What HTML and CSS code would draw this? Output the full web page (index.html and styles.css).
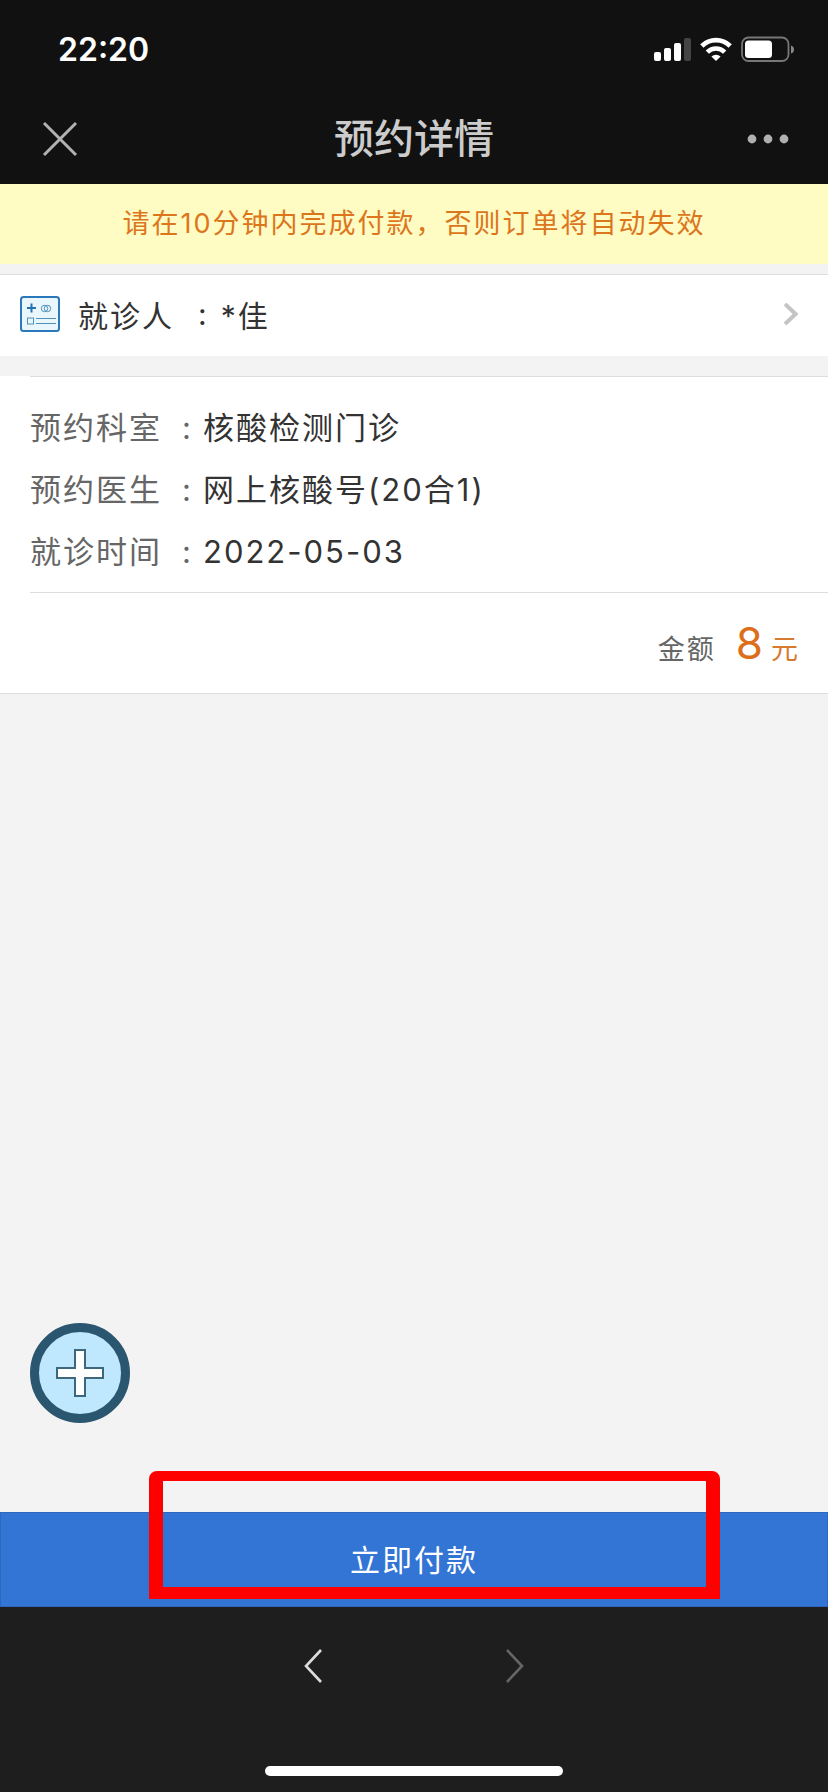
FILE: index.html
```
<!DOCTYPE html>
<html lang="zh-CN">
<head>
    <meta charset="UTF-8">
    <meta name="viewport" content="width=device-width, initial-scale=1.0">
    <title>预约详情</title>
    <link rel="stylesheet" href="styles.css">
</head>
<body>
    <header class="header">
        <div class="status-bar">
            <span class="time">22:20</span>
            <div class="status-icons">
                <svg width="37" height="24" viewBox="0 0 37 24">
                    <g fill="#fff">
                        <rect x="0" y="15" width="7" height="9" rx="2"/>
                        <rect x="10" y="11" width="7" height="13" rx="2"/>
                        <rect x="20" y="6" width="7" height="18" rx="2"/>
                    </g>
                    <rect x="30" y="1" width="7" height="23" rx="2" fill="#444"/>
                </svg>
                <svg width="32" height="24" viewBox="0 0 32 24">
                    <g fill="none" stroke="#fff" stroke-width="4.6">
                        <path d="M1.8 9A20.2 20.2 0 0 1 30.2 9"/>
                        <path d="M7.3 15.1A12.4 12.4 0 0 1 24.7 15.1"/>
                    </g>
                    <path d="M16 24l-4.6-4.5a6.6 6.6 0 0 1 9.2 0z" fill="#fff"/>
                </svg>
                <svg width="54" height="26" viewBox="0 0 54 26">
                    <rect x="1" y="1.5" width="46.5" height="23.5" rx="6.5" fill="none" stroke="#777" stroke-width="1.8"/>
                    <rect x="4" y="4.5" width="27" height="17.5" rx="3.5" fill="#fff"/>
                    <path d="M50 9.5q3 1 3 4t-3 4z" fill="#888"/>
                </svg>
            </div>
        </div>
        <nav class="nav-bar">
            <button class="nav-btn" aria-label="关闭">
                <svg width="36" height="36" viewBox="0 0 36 36"><path d="M2 2l32 32M34 2L2 34" stroke="#b2b2b2" stroke-width="3"/></svg>
            </button>
            <h1>预约详情</h1>
            <button class="nav-btn more" aria-label="更多">
                <svg width="42" height="10" viewBox="0 0 42 10" fill="#b0b0b0"><circle cx="5" cy="5" r="4.4"/><circle cx="21" cy="5" r="4.4"/><circle cx="37" cy="5" r="4.4"/></svg>
            </button>
        </nav>
    </header>

    <main class="content">
        <p class="notice">请在10分钟内完成付款，否则订单将自动失效</p>

        <a class="patient" href="#">
            <svg class="card-icon" width="40" height="36" viewBox="0 0 40 36" fill="none">
                <rect x="1" y="1" width="38" height="34" rx="2.5" fill="#e9f6fc" stroke="#2b78ba" stroke-width="2"/>
                <path d="M7 12h9M11.500 7.500v9" stroke="#2272b5" stroke-width="2"/>
                <circle cx="24.5" cy="12.5" r="3.2" stroke="#4f91bb"/>
                <circle cx="27.5" cy="12.5" r="3.2" stroke="#4f91bb"/>
                <rect x="7.5" y="22" width="6" height="6" stroke="#4f91bb"/>
                <path d="M16 22.500h20M16 27.500h20" stroke="#4f91bb"/>
            </svg>
            <span class="patient-label">就诊人</span>
            <span class="colon">:</span>
            <span class="patient-name">*佳</span>
            <svg class="arrow" width="14" height="22" viewBox="0 0 14 22"><path d="M1 1l10.500 10L1 21" fill="none" stroke="#c4c4c4" stroke-width="4"/></svg>
        </a>

        <section class="order">
            <dl class="details">
                <dt>预约科室</dt><dd>核酸检测门诊</dd>
                <dt>预约医生</dt><dd>网上核酸号(20合1)</dd>
                <dt>就诊时间</dt><dd>2022-05-03</dd>
            </dl>
            <p class="amount">金额<strong>8</strong><span>元</span></p>
        </section>

        <button class="float-btn" aria-label="添加">
            <svg width="48" height="48" viewBox="0 0 48 48"><path d="M19 1h10v18h18v10H29v18H19V29H1V19h18z" fill="#fff" stroke="#3c687c" stroke-width="2"/></svg>
        </button>
    </main>

    <div class="pay">
        <button class="pay-btn">立即付款</button>
        <div class="mark"></div>
    </div>

    <footer class="toolbar">
        <div class="history">
            <button class="nav-btn" aria-label="后退">
                <svg width="18" height="34" viewBox="0 0 18 34"><path d="M17 1L2 17l15 16" fill="none" stroke="#dcdcdc" stroke-width="2.6"/></svg>
            </button>
            <button class="nav-btn" aria-label="前进">
                <svg width="18" height="34" viewBox="0 0 18 34"><path d="M1 1l15 16L1 33" fill="none" stroke="#666" stroke-width="2.6"/></svg>
            </button>
        </div>
        <div class="home-line"></div>
    </footer>
</body>
</html>
```
FILE: styles.css
```
* {
    box-sizing: border-box;
}
body {
    display: flex;
    flex-direction: column;
    min-height: 100vh;
    margin: 0;
    background-color: #f3f3f3;
    color: #333;
    font-family: Inter, "Noto Sans CJK SC", sans-serif;
}
h1, p, dl, dd {
    margin: 0;
}
svg {
    display: block;
}
button {
    padding: 0;
    border: none;
    background: none;
    font-family: inherit;
    cursor: pointer;
}
.header {
    background-color: #111;
}
.status-bar {
    display: flex;
    justify-content: space-between;
    align-items: center;
    height: 98px;
    padding: 0 33px 0 58px;
}
.time {
    color: #fff;
    font-size: 32px;
    font-weight: 600;
}
.status-icons {
    display: flex;
    align-items: center;
    gap: 9px;
}
.nav-bar {
    display: grid;
    grid-template-columns: 1fr auto 1fr;
    align-items: center;
    height: 86px;
    padding: 0 39px 4px;
}
.nav-bar h1 {
    color: #ccc;
    font-size: 40px;
    font-weight: 500;
    line-height: 60px;
}
.nav-bar .nav-btn {
    justify-self: start;
    padding-left: 3px;
}
.nav-bar .more {
    justify-self: end;
}
.content {
    position: relative;
    flex: 1;
    letter-spacing: 2px;
}
.notice {
    padding: 20px 16px;
    background-color: #fefbc3;
    color: #dc761c;
    font-size: 27px;
    line-height: 40px;
    text-align: center;
}
.patient {
    display: flex;
    align-items: center;
    height: 82px;
    margin-top: 10px;
    padding: 0 30px 4px 20px;
    border-top: 1px solid #ddd;
    background-color: #fff;
    color: #333;
    font-size: 30px;
    text-decoration: none;
}
.patient-label {
    margin-left: 18px;
}
.colon {
    margin: 0 12px 0 24px;
}
.arrow {
    margin-left: auto;
}
.order {
    margin-top: 20px;
    padding-left: 30px;
    border-bottom: 1px solid #ddd;
    background-color: #fff;
}
.details {
    display: grid;
    grid-template-columns: 173px 1fr;
    padding: 20px 0 9px;
    border-top: 1px solid #ddd;
    border-bottom: 1px solid #ddd;
    font-size: 31px;
    line-height: 62px;
}
.details dt {
    display: flex;
    justify-content: space-between;
    padding-right: 10px;
    color: #666;
}
.details dt::after {
    content: ":";
}
.amount {
    display: flex;
    justify-content: flex-end;
    align-items: baseline;
    height: 100px;
    padding: 20px 28px 0 0;
    color: #666;
    font-size: 27px;
    line-height: 60px;
}
.amount strong {
    margin: 0 6px 0 20px;
    color: #dc6e1c;
    font-size: 44px;
    font-weight: 400;
}
.amount span {
    color: #d67a30;
}
.float-btn {
    position: absolute;
    left: 30px;
    bottom: 89px;
    display: flex;
    justify-content: center;
    align-items: center;
    width: 100px;
    height: 100px;
    border: 9px solid #2a566f;
    border-radius: 50%;
    background-color: #bfe7fd;
}
.pay {
    position: relative;
}
.pay-btn {
    display: block;
    width: 100%;
    height: 95px;
    padding-bottom: 4px;
    border: 1px solid #2c68bf;
    background-color: #3375d4;
    color: #fff;
    font-size: 30px;
    letter-spacing: 2px;
}
.mark {
    position: absolute;
    top: -41px;
    right: 13%;
    bottom: 8px;
    left: 18%;
    border: 14px solid #fe0000;
    border-width: 10px 14px 12px;
    border-radius: 8px 8px 0 0;
    pointer-events: none;
}
.toolbar {
    display: flex;
    flex-direction: column;
    justify-content: space-between;
    align-items: center;
    height: 185px;
    padding: 42px 0 16px;
    background-color: #1e1e1e;
}
.history {
    display: flex;
    gap: 184px;
}
.home-line {
    width: 36%;
    height: 10px;
    border-radius: 5px;
    background-color: #fff;
}
```
